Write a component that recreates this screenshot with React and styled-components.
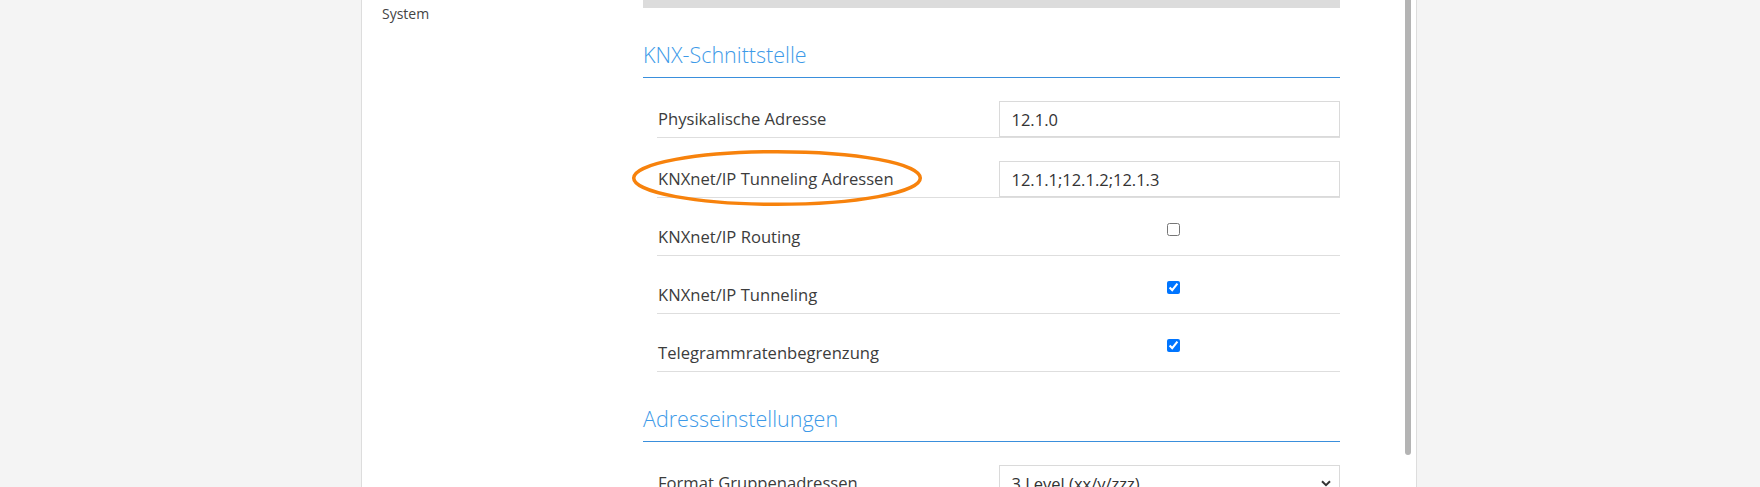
import React from "react";
import styled, { createGlobalStyle } from "styled-components";

const GlobalStyle = createGlobalStyle`
  html, body {
    margin: 0;
    padding: 0;
    height: 100%;
    overflow: hidden;
    background: #f4f4f4;
    font-family: "Open Sans", "Noto Sans", sans-serif;
    color: #3c3c3c;
  }
  #root { height: 100%; }
  * { box-sizing: border-box; }
`;

const Page = styled.div`
  height: 100%;
  padding-left: 361px;
  display: flex;
`;

const Panel = styled.div`
  width: 1056px;
  min-height: 100%;
  background: #ffffff;
  border-left: 1px solid #dddddd;
  border-right: 1px solid #dddddd;
  display: flex;
  align-items: flex-start;
  padding-right: 5px;
`;

const Sidebar = styled.nav`
  width: 281px;
  flex: none;
  padding: 4px 20px;
`;

const NavItem = styled.div`
  font-size: 14px;
  line-height: 20px;
  color: #444444;
`;

const Main = styled.main`
  width: 697px;
  flex: none;
`;

const TopBar = styled.div`
  height: 8px;
  background: #dcdcdc;
`;

const Heading = styled.h2`
  margin: 33px 0 0;
  padding-bottom: 8px;
  font-size: 21.5px;
  line-height: 28px;
  font-weight: 300;
  color: #3d9ae8;
  border-bottom: 1px solid #3a8fdc;
`;

const Rows = styled.div`
  margin-left: 14px;
`;

const Row = styled.div`
  position: relative;
  display: grid;
  grid-template-columns: 1fr 1fr;
  align-items: ${(p) => (p.$kind === "check" ? "start" : "center")};
  padding: ${(p) => (p.$kind === "check" ? "25px 0 6px" : "23px 0 0")};
  border-bottom: 1px solid #dedede;
`;

const Label = styled.div`
  padding-left: 1px;
  padding-top: ${(p) => (p.$kind === "check" ? "2px" : "0")};
  font-size: 16.6px;
  line-height: 24px;
  color: #3c3c3c;
  white-space: nowrap;
`;

const TextBox = styled.div`
  height: 36px;
  border: 1px solid #dadada;
  background: #ffffff;
  padding: 0 12px;
  display: flex;
  align-items: center;
  font-size: 16.5px;
  color: #333333;
`;

const CheckCell = styled.div`
  display: flex;
  justify-content: center;
  padding-left: 8px;
`;

const Check = styled.input`
  width: 13px;
  height: 13px;
  margin: 0;
`;

const SelectBox = styled(TextBox)`
  justify-content: space-between;
  padding-right: 8px;
`;

const Scrollbar = styled.div`
  width: 6px;
  height: 455px;
  margin-left: 65px;
  flex: none;
  background: #b4b4b4;
  border-radius: 0 0 3px 3px;
`;

const Highlight = styled.svg`
  position: absolute;
  left: -25px;
  top: 12px;
  width: 290px;
  height: 56px;
  overflow: visible;
  pointer-events: none;
`;

const Chevron = () => (
  <svg width="10" height="7" viewBox="0 0 10 7" aria-hidden="true">
    <path d="M1 1.2 L5 5.2 L9 1.2" fill="none" stroke="#333" strokeWidth="2" />
  </svg>
);

const inputRows = [
  { label: "Physikalische Adresse", value: "12.1.0" },
  { label: "KNXnet/IP Tunneling Adressen", value: "12.1.1;12.1.2;12.1.3", marked: true },
];

const checkRows = [
  { label: "KNXnet/IP Routing", checked: false },
  { label: "KNXnet/IP Tunneling", checked: true },
  { label: "Telegrammratenbegrenzung", checked: true },
];

export default function App() {
  return (
    <>
      <GlobalStyle />
      <Page>
        <Panel>
          <Sidebar>
            <NavItem>System</NavItem>
          </Sidebar>
          <Main>
            <TopBar />
            <Heading>KNX-Schnittstelle</Heading>
            <Rows>
              {inputRows.map((r) => (
                <Row key={r.label}>
                  <Label>{r.label}</Label>
                  <TextBox>{r.value}</TextBox>
                  {r.marked && (
                    <Highlight viewBox="0 0 290 56">
                      <ellipse
                        cx="145"
                        cy="28"
                        rx="143.3"
                        ry="26.3"
                        fill="none"
                        stroke="#f7820c"
                        strokeWidth="3.5"
                      />
                    </Highlight>
                  )}
                </Row>
              ))}
              {checkRows.map((r) => (
                <Row key={r.label} $kind="check">
                  <Label $kind="check">{r.label}</Label>
                  <CheckCell>
                    <Check type="checkbox" defaultChecked={r.checked} />
                  </CheckCell>
                </Row>
              ))}
            </Rows>
            <Heading>Adresseinstellungen</Heading>
            <Rows>
              <Row>
                <Label>Format Gruppenadressen</Label>
                <SelectBox>
                  <span>3 Level (xx/y/zzz)</span>
                  <Chevron />
                </SelectBox>
              </Row>
            </Rows>
          </Main>
          <Scrollbar />
        </Panel>
      </Page>
    </>
  );
}
